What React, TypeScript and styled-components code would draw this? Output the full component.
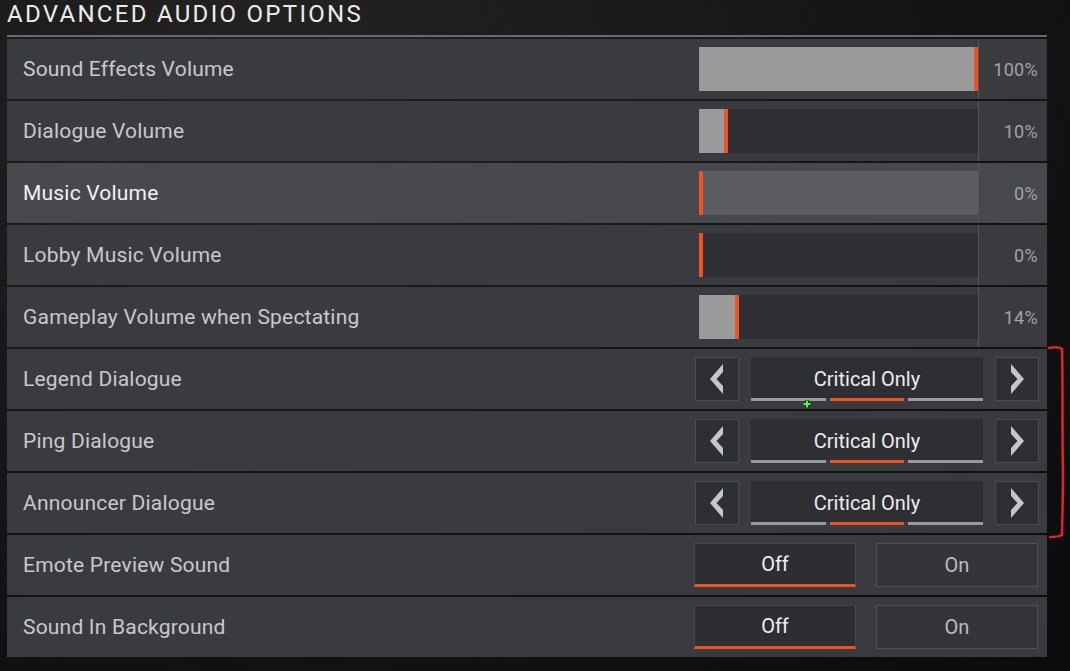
import styled, { createGlobalStyle } from "styled-components";

const GlobalStyle = createGlobalStyle`
  body {
    margin: 0;
    background: #0d0d0d;
    font-family: Roboto, "Liberation Sans", sans-serif;
  }
`;

const Page = styled.div`
  position: relative;
  width: 1070px;
  height: 671px;
  overflow: hidden;
  background: radial-gradient(ellipse at 25% 10%, #232323 0%, #161616 50%, #0b0b0b 100%);
`;
const Title = styled.div`
  height: 35px;
  padding-left: 7px;
  line-height: 29px;
  font-size: 24px;
  letter-spacing: 2.3px;
  color: #ececec;
`;
const List = styled.div`
  width: 1040px;
  margin-left: 7px;
  border-top: 2px solid #6a6a6a;
  padding-top: 2px;
  display: flex;
  flex-direction: column;
  gap: 2px;
`;
const Row = styled.div<{ $active?: boolean }>`
  height: 60px;
  display: flex;
  align-items: center;
  background: ${(p) => (p.$active ? "#48494d" : "#3a3b3f")};
`;
const Label = styled.div<{ $active?: boolean }>`
  flex: 1;
  padding-left: 16px;
  font-size: 21px;
  letter-spacing: 0.2px;
  color: ${(p) => (p.$active ? "#f2f2f2" : "#c9c9c9")};
`;
const Track = styled.div<{ $active?: boolean }>`
  position: relative;
  width: 279px;
  height: 44px;
  background: ${(p) => (p.$active ? "#5c5d61" : "#2f3033")};
`;
const Fill = styled.div`
  position: absolute;
  left: 0;
  top: 0;
  bottom: 0;
  background: #9b9b9b;
`;
const Marker = styled.div`
  position: absolute;
  top: 0;
  bottom: 0;
  width: 4px;
  background: #ec5428;
`;
const Value = styled.div`
  width: 69px;
  height: 60px;
  box-sizing: border-box;
  border-left: 1px solid #545559;
  padding-right: 9px;
  display: flex;
  align-items: center;
  justify-content: flex-end;
  font-size: 18px;
  letter-spacing: 0.3px;
  color: #a3a3a3;
`;
const Carousel = styled.div`
  display: flex;
  gap: 12px;
  padding-right: 8px;
`;
const ArrowBox = styled.div`
  width: 44px;
  height: 44px;
  box-sizing: border-box;
  border: 1px solid #4a4b4f;
  background: #2e2f32;
  display: flex;
  align-items: center;
  justify-content: center;
`;
const Choice = styled.div`
  width: 232px;
  height: 44px;
  display: flex;
  flex-direction: column;
`;
const ChoiceText = styled.div`
  flex: 1;
  padding-top: 2px;
  background: #2e2f32;
  display: flex;
  align-items: center;
  justify-content: center;
  font-size: 20px;
  color: #ededed;
`;
const Segments = styled.div`
  display: flex;
  gap: 4px;
  height: 3px;
`;
const Segment = styled.div<{ $on?: boolean }>`
  flex: 1;
  background: ${(p) => (p.$on ? "#ec5428" : "#9b9b9b")};
`;
const Toggle = styled.div`
  display: flex;
  gap: 20px;
  padding-right: 9px;
`;
const ToggleBtn = styled.div<{ $selected?: boolean }>`
  width: 162px;
  height: 44px;
  box-sizing: border-box;
  border: 1px solid ${(p) => (p.$selected ? "#46474b" : "#4e4f53")};
  border-bottom: ${(p) => (p.$selected ? "3px solid #ec5428" : "1px solid #4e4f53")};
  background: ${(p) => (p.$selected ? "#2d2e31" : "#343539")};
  display: flex;
  align-items: center;
  justify-content: center;
  font-size: 20px;
  color: ${(p) => (p.$selected ? "#f0f0f0" : "#bcbcbc")};
`;
const Bracket = styled.svg`
  position: absolute;
  left: 1044px;
  top: 343px;
`;
const Cursor = styled.svg`
  position: absolute;
  left: 802px;
  top: 399px;
`;

const sliders = [
  { label: "Sound Effects Volume", pct: 100 },
  { label: "Dialogue Volume", pct: 10 },
  { label: "Music Volume", pct: 0, active: true },
  { label: "Lobby Music Volume", pct: 0 },
  { label: "Gameplay Volume when Spectating", pct: 14 },
];
const choices = ["Legend Dialogue", "Ping Dialogue", "Announcer Dialogue"];
const toggles = ["Emote Preview Sound", "Sound In Background"];

function Chevron({ right }: { right?: boolean }) {
  return (
    <svg width="14" height="30" viewBox="0 0 14 30">
      <path
        d={right ? "M1 0 L1 8 L7.5 15 L1 22 L1 30 L14 15 Z" : "M13 0 L13 8 L6.5 15 L13 22 L13 30 L0 15 Z"}
        fill="#c6c6c6"
      />
    </svg>
  );
}

function App() {
  return (
    <Page>
      <GlobalStyle />
      <Title>ADVANCED AUDIO OPTIONS</Title>
      <List>
        {sliders.map((s) => (
          <Row key={s.label} $active={s.active}>
            <Label $active={s.active}>{s.label}</Label>
            <Track $active={s.active}>
              <Fill style={{ width: `${(s.pct / 100) * 275 - (s.pct > 0 && s.pct < 100 ? 3 : 0)}px` }} />
              <Marker style={{ left: `${(s.pct / 100) * 275 - (s.pct > 0 && s.pct < 100 ? 3 : 0)}px` }} />
            </Track>
            <Value>{s.pct}%</Value>
          </Row>
        ))}
        {choices.map((c) => (
          <Row key={c}>
            <Label>{c}</Label>
            <Carousel>
              <ArrowBox>
                <Chevron />
              </ArrowBox>
              <Choice>
                <ChoiceText>Critical Only</ChoiceText>
                <Segments>
                  <Segment />
                  <Segment $on />
                  <Segment />
                </Segments>
              </Choice>
              <ArrowBox>
                <Chevron right />
              </ArrowBox>
            </Carousel>
          </Row>
        ))}
        {toggles.map((t) => (
          <Row key={t}>
            <Label>{t}</Label>
            <Toggle>
              <ToggleBtn $selected>Off</ToggleBtn>
              <ToggleBtn>On</ToggleBtn>
            </Toggle>
          </Row>
        ))}
      </List>
      <Bracket width="26" height="200" viewBox="0 0 26 200">
        <path
          d="M5 5 C10 4 15 4 18 6 C19 40 18 90 19 130 C19 160 18 180 18 192 C14 194 9 194 6 194"
          fill="none"
          stroke="#e2222c"
          strokeWidth="2.5"
          strokeLinecap="round"
        />
      </Bracket>
      <Cursor width="10" height="10" viewBox="0 0 10 10">
        <path d="M5 1 V9 M1 5 H9" stroke="#1a3a10" strokeWidth="4" />
        <path d="M5 1.5 V8.5 M1.5 5 H8.5" stroke="#5ef03a" strokeWidth="2" />
      </Cursor>
    </Page>
  );
}

export default App;
